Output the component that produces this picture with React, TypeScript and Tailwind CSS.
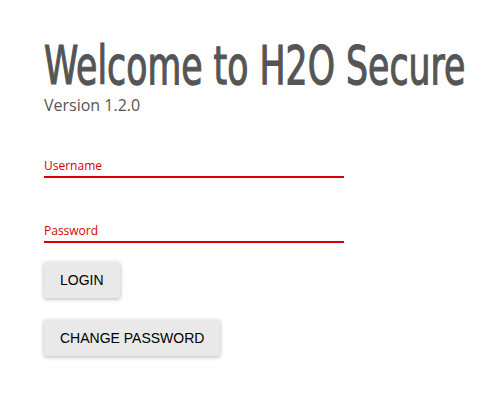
export default function App() {
  return (
    <div className="min-h-[396px] w-[488px] overflow-hidden bg-white pl-11 pt-[38px] font-['Open_Sans',sans-serif] text-[#555]">
      <h1 className="whitespace-nowrap font-['DejaVu_Sans_Condensed',sans-serif] text-[53px] font-normal leading-[56px] [-webkit-text-stroke:1.2px_#555]">
        <span className="inline-block origin-left scale-x-[0.728]">Welcome to H2O Secure</span>
      </h1>
      <p className="mt-0 text-base leading-[22px]">Version 1.2.0</p>

      <div className="mt-[36px] w-[300px] border-b-2 border-[#d50000]">
        <label className="text-xs leading-[17px] text-[#d50000]">Username</label>
      </div>
      <div className="mt-[39px] w-[300px] border-b-2 border-[#d50000]">
        <label className="text-xs leading-[17px] text-[#d50000]">Password</label>
      </div>

      <div className="mt-[19px] flex flex-col items-start gap-[22px]">
        <button className="h-9 rounded-[2px] bg-[#e9e9e9] px-4 font-['Liberation_Sans',Arial,sans-serif] text-sm text-black shadow-[0_1px_4px_rgba(0,0,0,0.3)]">
          LOGIN
        </button>
        <button className="h-9 rounded-[2px] bg-[#e9e9e9] px-4 font-['Liberation_Sans',Arial,sans-serif] text-sm text-black shadow-[0_1px_4px_rgba(0,0,0,0.3)]">
          CHANGE PASSWORD
        </button>
      </div>
    </div>
  );
}
